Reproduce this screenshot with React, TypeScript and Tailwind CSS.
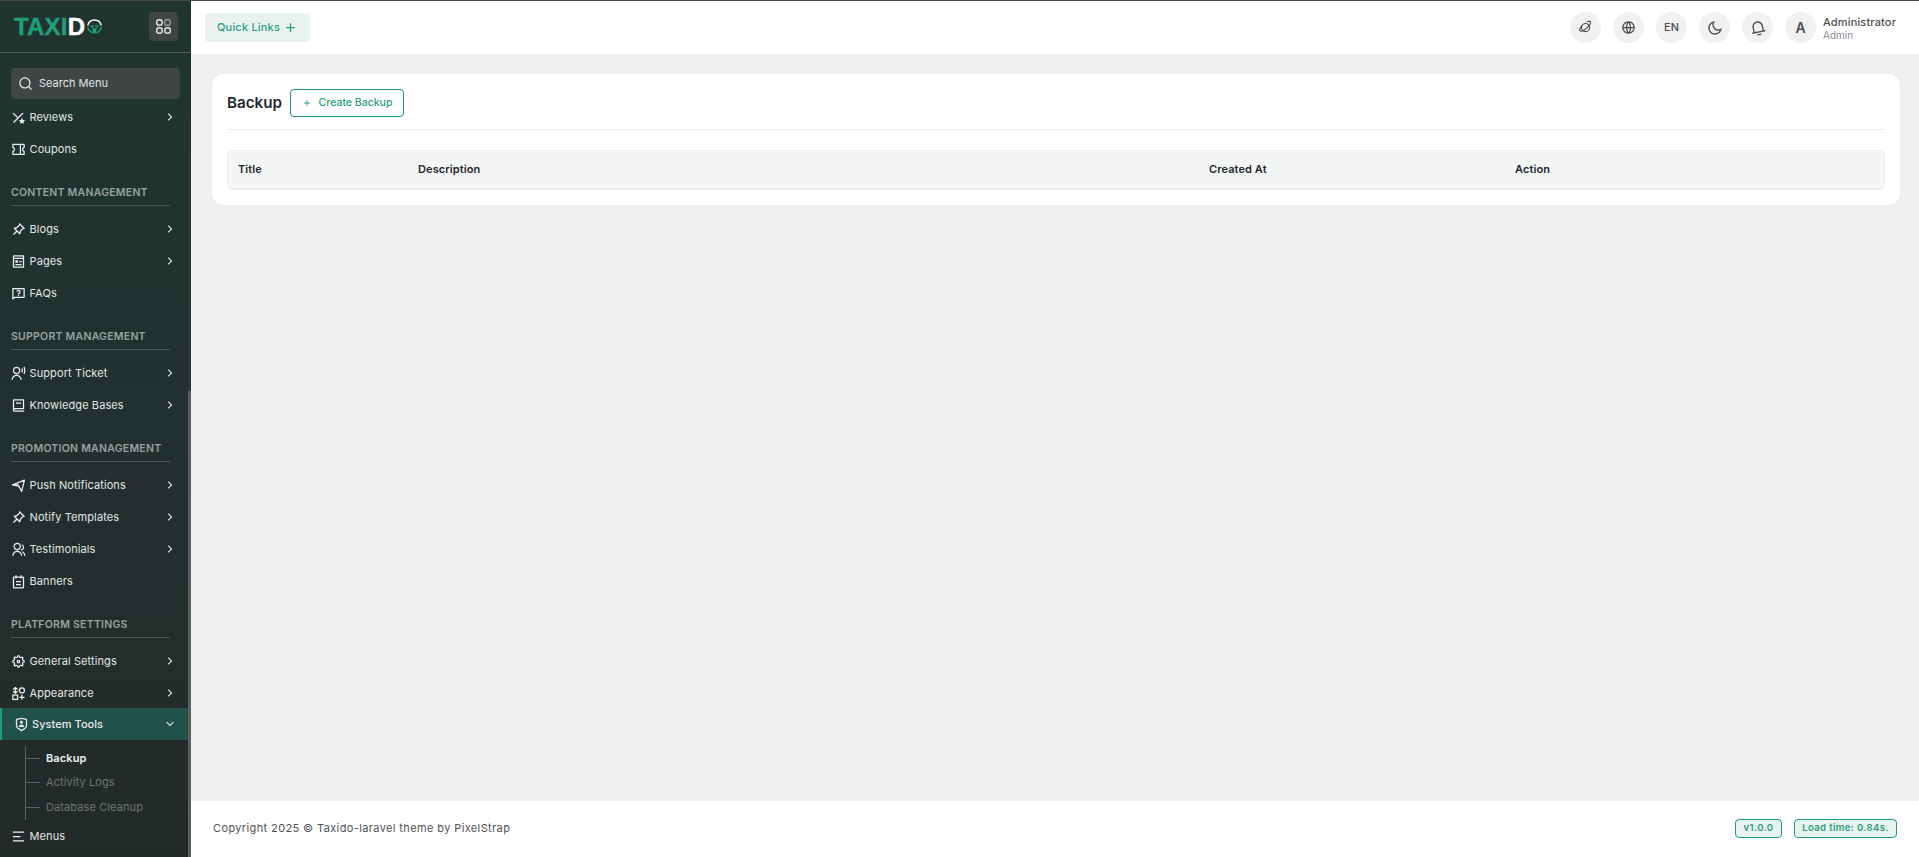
import type { ComponentType, ReactNode } from 'react'
import {
  RiAddLine,
  RiArrowDownSLine,
  RiArrowRightSLine,
  RiBook2Line,
  RiCoupon2Line,
  RiGlobalLine,
  RiGroupLine,
  RiMenu2Line,
  RiMoonLine,
  RiNotification3Line,
  RiPagesLine,
  RiPushpinLine,
  RiQuestionnaireLine,
  RiSearchLine,
  RiSettings5Line,
  RiShieldUserLine,
  RiUserVoiceLine,
} from 'react-icons/ri'

type IconType = ComponentType<{ className?: string }>

function ReviewsIcon({ className }: { className?: string }) {
  return (
    <svg viewBox="0 0 24 24" fill="none" stroke="currentColor" strokeWidth="2" className={className}>
      <path d="M3 5l9 8M20 4L4 20" />
      <path d="M17.5 12.5l1.6 3.3 3.4.5-2.5 2.4.6 3.4-3.1-1.6-3.1 1.6.6-3.4-2.5-2.4 3.4-.5z" fill="currentColor" stroke="none" />
    </svg>
  )
}

function PushIcon({ className }: { className?: string }) {
  return (
    <svg viewBox="0 0 24 24" fill="none" stroke="currentColor" strokeWidth="2" strokeLinejoin="round" className={className}>
      <path d="M2.5 11L21.5 3.5 17 21.5 12.5 13z" />
      <path d="M2.5 11h10" />
    </svg>
  )
}

function BannerIcon({ className }: { className?: string }) {
  return (
    <svg viewBox="0 0 24 24" fill="none" stroke="currentColor" strokeWidth="2" className={className}>
      <rect x="4" y="5" width="16" height="17" rx="1" />
      <path d="M8 2v5M16 2v5M8 12h8M8 17h8" />
    </svg>
  )
}

function AppearanceIcon({ className }: { className?: string }) {
  return (
    <svg viewBox="0 0 24 24" fill="none" stroke="currentColor" strokeWidth="2" className={className}>
      <path d="M7 2.5v9M3.5 5.5L7 2.5l3.5 3M3.5 8.5L7 11.5l3.5-3" />
      <circle cx="17.5" cy="7" r="4" />
      <rect x="3" y="14.5" width="7.5" height="7" />
      <path d="M17.5 14v8M13.5 18h8" />
    </svg>
  )
}

function PlanetIcon({ className }: { className?: string }) {
  return (
    <svg viewBox="0 0 24 24" fill="none" stroke="currentColor" strokeWidth="1.8" className={className}>
      <circle cx="12" cy="12" r="6.5" />
      <path d="M7 8.5C4 11.5 2 15.5 3.2 17.2c1.5 2 7-.5 11-4.5s6.6-8.6 5.4-10.2c-.9-1.1-3-.6-5.5.9" />
    </svg>
  )
}

function ToggleIcon() {
  return (
    <svg viewBox="0 0 20 20" className="w-[17px] h-[17px]" fill="none" stroke="currentColor" strokeWidth="1.6">
      <rect x="2" y="2" width="6.5" height="6.5" rx="3" />
      <rect x="11.5" y="2" width="6.5" height="6.5" rx="2" opacity="0.55" />
      <rect x="2" y="11.5" width="6.5" height="6.5" rx="3" />
      <rect x="11.5" y="11.5" width="6.5" height="6.5" rx="3" />
    </svg>
  )
}

function Wheel() {
  return (
    <svg viewBox="0 0 24 24" className="w-[17px] h-[17px] ml-[1px]" fill="none">
      <path d="M2.5 10.5a9.7 9.7 0 0 1 19 0" stroke="#fff" strokeWidth="2" />
      <path d="M2.4 12.5a9.7 9.7 0 0 0 19.2 0" stroke="#1f9d77" strokeWidth="2.2" />
      <path d="M4 10.5h16l-4.5 2.5-1.5 7h-4l-1.5-7z" fill="#1f9d77" />
      <circle cx="12" cy="13" r="1.8" fill="#20352f" />
    </svg>
  )
}

function Heading({ label }: { label: string }) {
  return (
    <div className="h-12 pt-[20px]">
      <div className="mx-[11px] w-[159px] h-[21px] border-b border-[#4b5554] text-[10.5px] leading-[16px] font-semibold tracking-[0.25px] text-[#9aa19f] uppercase whitespace-nowrap">
        {label}
      </div>
    </div>
  )
}

function Item({ icon: Icon, label, arrow = true }: { icon: IconType; label: string; arrow?: boolean }) {
  return (
    <div className="h-8 flex items-center pl-[11px] pr-[11px] text-[#e3e6e5]">
      <Icon className="w-[15px] h-[15px] shrink-0 text-[#eef0ef]" />
      <span className="ml-[3.5px] text-[11px] tracking-[0.1px] flex-1 whitespace-nowrap">{label}</span>
      {arrow && <RiArrowRightSLine className="w-[14px] h-[14px]" />}
    </div>
  )
}

function SubItem({ label, active }: { label: string; active?: boolean }) {
  return (
    <div className={`flex items-center ${active ? 'h-[24px]' : 'h-[25px]'}`}>
      <span className="w-[14px] h-px bg-[#5b6261] shrink-0" />
      <span className={`ml-[6px] text-[11px] tracking-[0.1px] whitespace-nowrap ${active ? 'text-[#eef0ef] font-semibold' : 'text-[#6d7473]'}`}>
        {label}
      </span>
    </div>
  )
}

function Sidebar() {
  return (
    <aside className="w-[191px] shrink-0 flex flex-col bg-gradient-to-b from-[#20352f] via-[#22302f] to-[#222a29] overflow-hidden">
      <div className="h-[52px] shrink-0 border-b border-[#4f5a58] flex items-center justify-between pl-[14px] pr-[13px]">
        <div className="flex items-center">
          <span className="text-[24px] leading-none font-black tracking-[0.2px] text-[#1f9d77] [-webkit-text-stroke:0.4px_#1f9d77]" style={{ fontFamily: '"Liberation Sans", sans-serif' }}>
            TAXI<span className="text-white [-webkit-text-stroke:0.4px_#fff]">D</span>
          </span>
          <Wheel />
        </div>
        <button className="w-[29px] h-[29px] rounded bg-[#3e4544] flex items-center justify-center text-[#e6e8e7]">
          <ToggleIcon />
        </button>
      </div>
      <div className="px-[11px] pt-[15px] pb-[14px] shrink-0">
        <div className="h-[31px] rounded bg-[#3e4544] flex items-center pl-[7px] text-[#e3e6e5]">
          <RiSearchLine className="w-[15px] h-[15px]" />
          <span className="ml-[6px] text-[11px]">Search Menu</span>
        </div>
      </div>
      <div className="flex-1 flex min-h-0">
        <div className="flex-1 overflow-hidden">
          <div className="-mt-[12px]">
            <Item icon={ReviewsIcon} label="Reviews" />
            <Item icon={RiCoupon2Line} label="Coupons" arrow={false} />
            <Heading label="Content Management" />
            <Item icon={RiPushpinLine} label="Blogs" />
            <Item icon={RiPagesLine} label="Pages" />
            <Item icon={RiQuestionnaireLine} label="FAQs" arrow={false} />
            <Heading label="Support Management" />
            <Item icon={RiUserVoiceLine} label="Support Ticket" />
            <Item icon={RiBook2Line} label="Knowledge Bases" />
            <Heading label="Promotion Management" />
            <Item icon={PushIcon} label="Push Notifications" />
            <Item icon={RiPushpinLine} label="Notify Templates" />
            <Item icon={RiGroupLine} label="Testimonials" />
            <Item icon={BannerIcon} label="Banners" arrow={false} />
            <Heading label="Platform Settings" />
            <Item icon={RiSettings5Line} label="General Settings" />
            <Item icon={AppearanceIcon} label="Appearance" />
            <div className="h-8 -mt-px flex items-center pl-[11.5px] pr-[11px] bg-[#22504a] border-l-2 border-[#1f9d77] text-[#e8ebea]">
              <RiShieldUserLine className="w-[15px] h-[15px] shrink-0" />
              <span className="ml-[3.5px] text-[11px] font-medium tracking-[0.05px] flex-1">System Tools</span>
              <RiArrowDownSLine className="w-[14px] h-[14px]" />
            </div>
            <div className="ml-[25px] mt-[6px] border-l border-[#5b6261]">
              <SubItem label="Backup" active />
              <SubItem label="Activity Logs" />
              <SubItem label="Database Cleanup" />
            </div>
            <Item icon={RiMenu2Line} label="Menus" arrow={false} />
          </div>
        </div>
        <div className="w-[3px] shrink-0 bg-[#2a3534] flex flex-col justify-end">
          <div className="h-[466px] bg-[#5a5f5e]" />
        </div>
      </div>
    </aside>
  )
}

function RoundBtn({ children }: { children: ReactNode }) {
  return (
    <div className="w-[31px] h-[31px] rounded-full bg-[#f1f1f1] flex items-center justify-center text-[#4a4e52]">
      {children}
    </div>
  )
}

function Topbar() {
  return (
    <header className="h-[53px] shrink-0 bg-white flex items-center pl-[14px] pr-[22px]">
      <div className="h-[29px] w-[105px] rounded bg-[#e8f3f0] flex items-center justify-center text-[#2a9d7b]">
        <span className="text-[11px] font-medium tracking-[0.2px]">Quick Links</span>
        <RiAddLine className="w-[15px] h-[15px] ml-[3px]" />
      </div>
      <div className="ml-auto flex items-center gap-[12px]">
        <RoundBtn><PlanetIcon className="w-[15px] h-[15px]" /></RoundBtn>
        <RoundBtn><RiGlobalLine className="w-[15px] h-[15px]" /></RoundBtn>
        <RoundBtn><span className="text-[11px] font-medium">EN</span></RoundBtn>
        <RoundBtn><RiMoonLine className="w-[16px] h-[16px]" /></RoundBtn>
        <RoundBtn><RiNotification3Line className="w-[16px] h-[16px] -rotate-12" /></RoundBtn>
        <RoundBtn><span className="text-[14px] font-semibold">A</span></RoundBtn>
        <div className="-ml-[5px] w-[74px]">
          <div className="text-[11px] leading-[14px] font-medium text-[#4a4e52] tracking-[0.15px]">Administrator</div>
          <div className="text-[10px] leading-[12px] text-[#8a8e91]">Admin</div>
        </div>
      </div>
    </header>
  )
}

const COLUMNS = [
  { label: 'Title', width: 'w-[180px]' },
  { label: 'Description', width: 'w-[791px]' },
  { label: 'Created At', width: 'w-[306px]' },
  { label: 'Action', width: '' },
]

function BackupCard() {
  return (
    <section className="bg-white rounded-xl h-[131px] pl-[15px] pr-[15px] pt-[15px]">
      <div className="h-[41px] border-b border-[#edeeee] flex items-start">
        <div className="h-7 flex items-center">
          <h1 className="text-[15.2px] font-semibold text-[#23272f]">Backup</h1>
          <button className="ml-[8px] h-7 w-[114px] rounded border border-[#1f9478] flex items-center justify-center text-[#2a9d7b] text-[10.5px] font-medium">
            <RiAddLine className="w-[10px] h-[10px] mr-[7px]" />
            Create Backup
          </button>
        </div>
      </div>
      <div className="mt-5 h-10 rounded-md border border-[#ecedec] border-b-2 bg-[#f4f6f5] flex items-center pl-[10px]">
        {COLUMNS.map((c) => (
          <div key={c.label} className={`${c.width} text-[11px] font-semibold text-[#23272f] tracking-[0.1px]`}>{c.label}</div>
        ))}
      </div>
    </section>
  )
}

function Footer() {
  return (
    <footer className="h-[56px] shrink-0 bg-white flex items-center pl-[22px] pr-[22px] pb-[2px]">
      <span className="text-[11px] tracking-[0.38px] text-[#4f5356]">Copyright 2025 © Taxido-laravel theme by PixelStrap</span>
      <div className="ml-auto flex gap-3">
        <span className="h-[19px] w-[47px] rounded border border-[#1f9d77] bg-[#e8f3f0] text-[#2a9d7b] text-[9.5px] font-semibold tracking-[0.4px] flex items-center justify-center">v1.0.0</span>
        <span className="h-[19px] w-[103px] rounded border border-[#1f9d77] bg-[#e8f3f0] text-[#2a9d7b] text-[9.5px] font-semibold tracking-[0.4px] flex items-center justify-center">Load time: 0.84s.</span>
      </div>
    </footer>
  )
}

export default function App() {
  return (
    <div className="h-[857px] w-full overflow-hidden flex flex-col bg-[#eef0ed]" style={{ fontFamily: 'Inter, sans-serif' }}>
      <div className="h-px shrink-0 bg-[#444]" />
      <div className="flex-1 flex min-h-0">
        <Sidebar />
        <main className="flex-1 min-w-0 flex flex-col">
          <Topbar />
          <div className="flex-1 pt-5 pl-[21px] pr-[19px]">
            <BackupCard />
          </div>
          <Footer />
        </main>
      </div>
    </div>
  )
}
